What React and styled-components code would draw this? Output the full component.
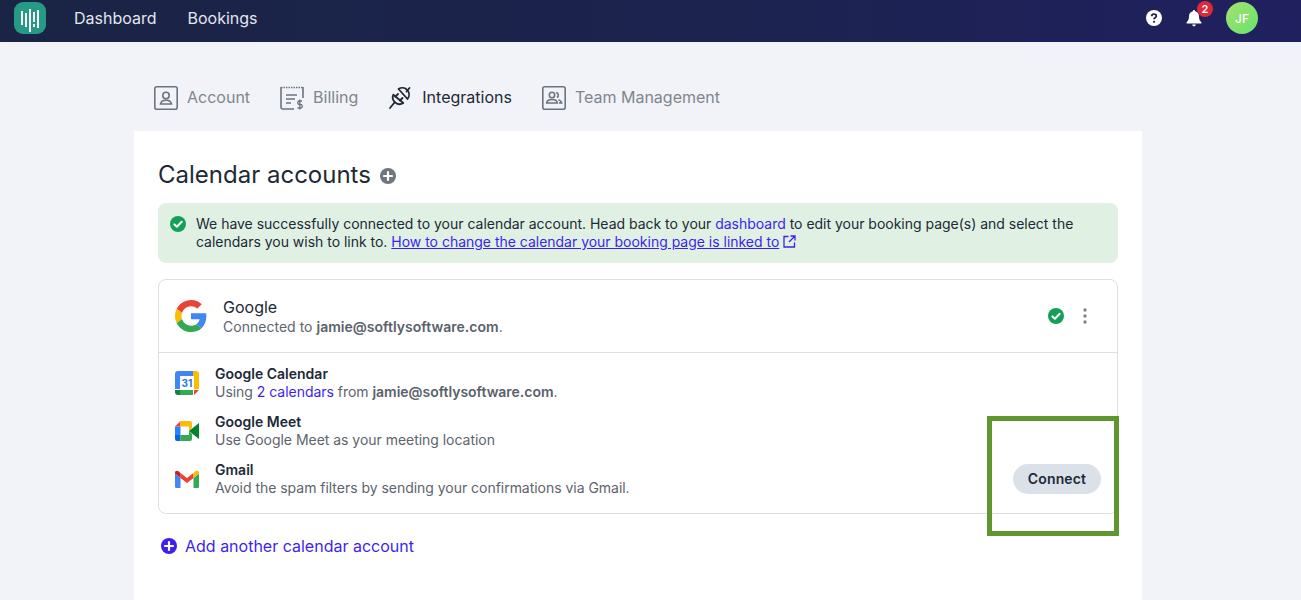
import React from "react";
import styled, { createGlobalStyle } from "styled-components";

const Global = createGlobalStyle`
  html, body { margin: 0; padding: 0; height: 600px; overflow: hidden; background: #f1f3f8; }
  body { font-family: Inter, "Liberation Sans", sans-serif; color: #212936; }
  * { box-sizing: border-box; }
`;
const Page = styled.div`position: relative; height: 600px; overflow: hidden;`;
const Nav = styled.header`
  height: 42px; display: flex; align-items: center; padding: 0 43px 6px 14px;
  background: linear-gradient(90deg, #1a2444 0%, #1c2350 60%, #20205f 100%);
`;
const Logo = styled.svg`width: 32px; height: 32px; display: block; margin-right: 28px;`;
const NavLink = styled.a`
  color: #e4e6ee; font-size: 16px; line-height: 20px; margin-right: 31px;
`;
const Spacer = styled.div`flex: 1;`;
const NavIcon = styled.div`position: relative; width: 16px; height: 16px; display: flex; margin-right: ${p => p.$mr}px;`;
const Badge = styled.span`
  position: absolute; top: -9px; left: 11px; width: 16px; height: 16px; border-radius: 50%;
  background: #dc2a3c; color: #fff; font-size: 11px; font-weight: 600; display: flex; align-items: center; justify-content: center;
`;
const Avatar = styled.div`
  width: 32px; height: 32px; border-radius: 50%; background: linear-gradient(135deg, #a6e06f, #66e46c);
  color: #fff; font-size: 12px; font-weight: 500; display: flex; align-items: center; justify-content: center;
`;
const Tabs = styled.nav`
  display: flex; align-items: center; height: 89px; padding: 22px 0 0 154px; gap: 30px;
`;
const Tab = styled.div`
  display: flex; align-items: center; gap: ${p => p.$gap || 9}px; font-size: 16px; line-height: 24px;
  color: ${p => (p.$active ? "#212936" : "#7f868e")};
`;
const TabLabel = styled.span`margin-bottom: 2px;`;
const TabIcon = styled.svg`width: 24px; height: 24px; display: block; flex: none;`;
const Panel = styled.main`
  margin-left: 134px; width: 1008px; height: 480px; background: #fff; padding: 28px 24px 0;
`;
const TitleRow = styled.div`display: flex; align-items: center; gap: 9px; height: 32px;`;
const Title = styled.h1`margin: 0; font-size: 24px; line-height: 32px; font-weight: 400; color: #212936;`;
const TitleAdd = styled.span`display: block; margin-top: 2px;`;
const Alert = styled.div`
  margin-top: 12px; height: 60px; background: #e0f1e3; border-radius: 8px; padding: 12px 12px 0 12px;
  display: flex; gap: 10px; font-size: 14px; line-height: 18px; color: #212936;
`;
const CheckIcon = styled.svg`width: 16px; height: 16px; flex: none; margin-top: ${p => p.$mt || 0}px;`;
const AlertText = styled.p`margin: 0; letter-spacing: -.015px;`;
const Link = styled.a`color: #3d1ff0; text-decoration: ${p => (p.$u ? "underline" : "none")};`;
const Card = styled.section`
  margin-top: 16px; height: 235px; border: 1px solid #dbe0e6; border-radius: 8px;
`;
const CardHead = styled.div`
  height: 73px; border-bottom: 1px solid #dbe0e6; display: flex; align-items: center; padding: 0 24px 0 16px;
`;
const HeadText = styled.div`margin-left: 16px; flex: 1;`;
const HeadName = styled.div`font-size: 16px; line-height: 20px; color: #212936;`;
const HeadSub = styled.div`font-size: 14px; line-height: 18px; color: #5d646d; margin-top: 1px; letter-spacing: .02px;`;
const Strong = styled.b`font-weight: 600; color: #5a616a;`;
const Rows = styled.div`padding: 12px 16px 0; display: flex; flex-direction: column; gap: 12px;`;
const Row = styled.div`display: flex; align-items: center; height: 36px; gap: 16px;`;
const RowIcon = styled.svg`width: 24px; height: 24px; flex: none;`;
const RowBody = styled.div`flex: 1;`;
const RowName = styled.div`font-size: 14px; line-height: 18px; font-weight: 600; color: #212936;`;
const RowSub = styled.div`font-size: 14px; line-height: 18px; color: #5d646d; letter-spacing: -.03px;`;
const Connect = styled.button`
  border: 0; height: 30px; width: 88px; border-radius: 15px; background: #dbe1e8;
  font: 600 14px/18px Inter, sans-serif; color: #212936; letter-spacing: .15px; padding: 0;
`;
const AddRow = styled.div`
  margin: 22px 0 0 3px; display: flex; align-items: center; gap: 8px; color: #3d1ff0; font-size: 16px; line-height: 20px;
`;
const Highlight = styled.div`
  position: absolute; left: 987px; top: 416px; width: 132px; height: 120px; border: 5px solid #5f962e; pointer-events: none;
`;
const PlusSvg = styled.svg`display: block; flex: none; width: ${p => p.$s}px; height: ${p => p.$s}px;`;
const Dots = styled.svg`width: 4px; height: 16px; margin: 0 6px 0 19px; flex: none;`;
const ExtLink = styled.svg`width: 13px; height: 13px; vertical-align: -1px;`;

const Plus = ({ s, c }) => (
  <PlusSvg $s={s} viewBox="0 0 16 16">
    <circle cx="8" cy="8" r="8" fill={c} />
    <path d="M8 4v8M4 8h8" stroke="#fff" strokeWidth="2.2" strokeLinecap="round" />
  </PlusSvg>
);
const Check = ({ mt }) => (
  <CheckIcon $mt={mt} viewBox="0 0 16 16">
    <circle cx="8" cy="8" r="8" fill="#14a058" />
    <path d="M4.400 8.400l2.500 2.300 4.800-5" fill="none" stroke="#fff" strokeWidth="2" strokeLinecap="round" strokeLinejoin="round" />
  </CheckIcon>
);
const G = () => (
  <svg width="32" height="32" viewBox="0 0 48 48">
    <path fill="#EA4335" d="M24 9.500c3.500 0 6.700 1.200 9.200 3.600l6.900-6.900C35.900 2.400 30.500 0 24 0 14.600 0 6.500 5.400 2.600 13.200l8 6.200C12.400 13.700 17.700 9.500 24 9.500z" />
    <path fill="#4285F4" d="M47 24.500c0-1.600-.1-3.100-.4-4.500H24v9h12.900c-.6 3-2.200 5.500-4.700 7.200l7.700 6C44.400 38 47 31.800 47 24.500z" />
    <path fill="#FBBC05" d="M10.500 28.600c-.5-1.400-.8-3-.8-4.600s.3-3.200.8-4.600l-8-6.200C.9 16.400 0 20.100 0 24s.9 7.600 2.600 10.800l7.900-6.200z" />
    <path fill="#34A853" d="M24 48c6.500 0 11.900-2.100 15.900-5.800l-7.700-6c-2.200 1.400-4.900 2.300-8.200 2.300-6.300 0-11.600-4.200-13.500-9.900l-8 6.200C6.500 42.600 14.600 48 24 48z" />
  </svg>
);

export default function App() {
  return (
    <Page>
      <Global />
      <Nav>
        <Logo viewBox="0 0 32 32">
          <rect width="32" height="32" rx="9" fill="#259a84" />
          <g fill="#fff">
            <rect x="7" y="9" width="2" height="14" />
            <rect x="11" y="11" width="2" height="14" />
            <rect x="15" y="7" width="2" height="23" />
            <rect x="19" y="10" width="2" height="10" />
            <rect x="19" y="22" width="2" height="3" />
            <rect x="23" y="8" width="2" height="18" />
          </g>
        </Logo>
        <NavLink>Dashboard</NavLink>
        <NavLink>Bookings</NavLink>
        <Spacer />
        <NavIcon $mr={24}>
          <svg width="16" height="16" viewBox="0 0 16 16">
            <circle cx="8" cy="8" r="8" fill="#fff" />
            <path d="M5.700 6.200C5.800 4.900 6.800 4.200 8 4.200c1.300 0 2.300.8 2.300 1.900 0 1.700-2.300 1.700-2.300 3.200" fill="none" stroke="#1f2159" strokeWidth="1.800" />
            <circle cx="8" cy="11.800" r="1.100" fill="#1f2159" />
          </svg>
        </NavIcon>
        <NavIcon $mr={24}>
          <svg width="16" height="17" viewBox="0 0 16 17">
            <path d="M8 0a1.200 1.200 0 0 1 1.200 1.200C11.600 1.800 13 3.800 13 6.300c0 3.500 1 4.700 2.400 6V13.500H.6v-1.200C2 11 3 9.800 3 6.300 3 3.800 4.400 1.800 6.800 1.200A1.200 1.200 0 0 1 8 0z" fill="#fff" />
            <path d="M6.200 14.600h3.600a1.800 1.800 0 0 1-3.600 0z" fill="#fff" />
          </svg>
          <Badge>2</Badge>
        </NavIcon>
        <Avatar>JF</Avatar>
      </Nav>
      <Tabs>
        <Tab>
          <TabIcon viewBox="0 0 24 24" fill="none" stroke="#6b7480" strokeWidth="1.600">
            <rect x=".8" y=".8" width="22.400" height="22.400" rx="2" />
            <circle cx="12" cy="9.500" r="3.200" />
            <path d="M6.500 18c.5-2.800 2.500-3.800 5.500-3.800s5 1 5.500 3.800z" />
          </TabIcon>
          <TabLabel>Account</TabLabel>
        </Tab>
        <Tab>
          <TabIcon viewBox="0 0 24 24" fill="none" stroke="#6b7480" strokeWidth="1.600">
            <path d="M1 1.500h22" strokeDasharray="1.500 1" />
            <path d="M1 1v20a2 2 0 0 0 2 2h11M23 1v11" />
            <path d="M6 9h11M6 13h9M6 17h5" />
            <path d="M22 15h-2.500a1.300 1.300 0 0 0 0 3.500h1a1.300 1.300 0 0 1 0 3.500H17.500M19.800 13.500v10" strokeWidth="1.300" />
          </TabIcon>
          <TabLabel>Billing</TabLabel>
        </Tab>
        <Tab $active $gap={10}>
          <TabIcon viewBox="0 0 24 24" fill="none" stroke="#212936" strokeWidth="1.800" strokeLinecap="round" strokeLinejoin="round">
            <path d="M10.500 3L19.500 13A6.800 6.800 0 0 0 10.500 3z" />
            <path d="M18.500 5.500L21.500 2" />
            <path d="M5.300 8.700L15.300 17A6.800 6.800 0 0 1 5.300 8.700z" />
            <path d="M6.500 16.500L2 22M7.500 10.500l2.500-2.500M12 14.500l2.500-2.500" />
          </TabIcon>
          <TabLabel>Integrations</TabLabel>
        </Tab>
        <Tab>
          <TabIcon viewBox="0 0 24 24" fill="none" stroke="#6b7480" strokeWidth="1.600">
            <rect x=".8" y=".8" width="22.400" height="22.400" rx="2" />
            <circle cx="10" cy="9" r="2.700" />
            <path d="M4.700 17c.3-2.600 2-3.500 5.300-3.500s5 .9 5.300 3.500zM14 6.500a2.700 2.700 0 0 1 1 5M16.500 13.800c1.700.5 2.800 1.500 3.200 3.200H17" />
          </TabIcon>
          <TabLabel>Team Management</TabLabel>
        </Tab>
      </Tabs>
      <Panel>
        <TitleRow>
          <Title>Calendar accounts</Title>
          <TitleAdd>
            <Plus s={16} c="#6f767f" />
          </TitleAdd>
        </TitleRow>
        <Alert>
          <Check mt={1} />
          <AlertText>
            We have successfully connected to your calendar account. Head back to your <Link>dashboard</Link> to edit your booking page(s) and select the
            <br />
            calendars you wish to link to. <Link $u>How to change the calendar your booking page is linked to</Link>{" "}
            <ExtLink viewBox="0 0 13 13" fill="none" stroke="#3d1ff0" strokeWidth="1.300">
              <path d="M5.500 1.500H1v10.500h10.500V7.500M7.500 1h4.500v4.500M12 1L6 7" />
            </ExtLink>
          </AlertText>
        </Alert>
        <Card>
          <CardHead>
            <G />
            <HeadText>
              <HeadName>Google</HeadName>
              <HeadSub>
                Connected to <Strong>jamie@softlysoftware.com</Strong>.
              </HeadSub>
            </HeadText>
            <Check />
            <Dots viewBox="0 0 4 16">
              <circle cx="2" cy="2" r="1.700" fill="#7c838b" />
              <circle cx="2" cy="8" r="1.700" fill="#7c838b" />
              <circle cx="2" cy="14" r="1.700" fill="#7c838b" />
            </Dots>
          </CardHead>
          <Rows>
            <Row>
              <RowIcon viewBox="0 0 24 24">
                <path fill="#fff" d="M5 5h14v14H5z" />
                <path fill="#4285F4" d="M3 0h15v5H5v13H0V3a3 3 0 0 1 3-3z" />
                <path fill="#FBBC04" d="M18 0h3a3 3 0 0 1 3 3v15h-5V5h-1z" />
                <path fill="#34A853" d="M5 19h13v5H5z" />
                <path fill="#188038" d="M0 19h5v5H3a3 3 0 0 1-3-3z" />
                <path fill="#EA4335" d="M19 19h5l-5 5z" />
                <text x="12" y="16" textAnchor="middle" fontSize="10" fontWeight="700" fill="#1a73e8" fontFamily="Inter, sans-serif">31</text>
              </RowIcon>
              <RowBody>
                <RowName>Google Calendar</RowName>
                <RowSub>
                  Using <Link>2 calendars</Link> from <Strong>jamie@softlysoftware.com</Strong>.
                </RowSub>
              </RowBody>
            </Row>
            <Row>
              <RowIcon viewBox="0 0 24 24">
                <path fill="#EA4335" d="M5.500 2L0 7.500h5.500z" />
                <path fill="#FBBC04" d="M5.500 2H15a2 2 0 0 1 2 2v5l-3 3V7.500H5.500z" />
                <path fill="#2684FC" d="M0 7.500h5.500V16H0z" />
                <path fill="#0066DA" d="M0 16h5.500v6H2a2 2 0 0 1-2-2z" />
                <path fill="#34A853" d="M5.500 16H14v-4l3 3v5a2 2 0 0 1-2 2H5.500z" />
                <path fill="#00832D" d="M14 12l10-8v16z" />
              </RowIcon>
              <RowBody>
                <RowName>Google Meet</RowName>
                <RowSub>Use Google Meet as your meeting location</RowSub>
              </RowBody>
            </Row>
            <Row>
              <RowIcon viewBox="0 0 24 24">
                <path fill="#4285F4" d="M0 6.500v13A1.500 1.500 0 0 0 1.500 21H5.500V11z" />
                <path fill="#34A853" d="M18.500 11v10h4a1.500 1.500 0 0 0 1.500-1.500v-13z" />
                <path fill="#EA4335" d="M5.500 11v-5L12 11l6.500-5v5L12 16z" />
                <path fill="#C5221F" d="M0 5.500v1l5.500 4.500V6L3.500 4.300C2 3 0 4 0 5.500z" />
                <path fill="#FBBC04" d="M18.500 6v5L24 6.500v-1C24 4 22 3 20.500 4.300z" />
              </RowIcon>
              <RowBody>
                <RowName>Gmail</RowName>
                <RowSub>Avoid the spam filters by sending your confirmations via Gmail.</RowSub>
              </RowBody>
              <Connect>Connect</Connect>
            </Row>
          </Rows>
        </Card>
        <AddRow>
          <Plus s={16} c="#3d1ff0" />
          Add another calendar account
        </AddRow>
      </Panel>
      <Highlight />
    </Page>
  );
}
